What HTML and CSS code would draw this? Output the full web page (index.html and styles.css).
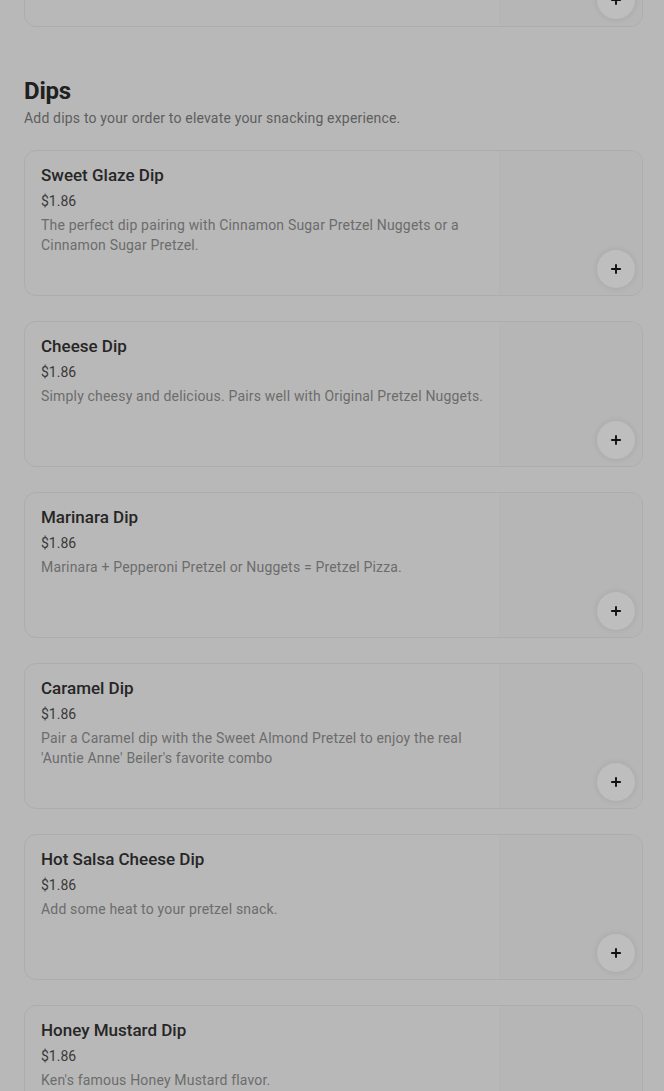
FILE: index.html
```html
<!DOCTYPE html>
<html lang="en">
<head>
<meta charset="utf-8">
<title>Dips</title>
<link rel="stylesheet" href="styles.css">
</head>
<body>
<main class="page">
  <div class="card prev-card">
    <div class="card-body"></div>
    <div class="card-media">
      <button class="add-btn" aria-label="Add"><svg viewBox="0 0 16 16" width="16" height="16"><path d="M8 2.5v11M2.5 8h11" stroke="#111" stroke-width="2.2" fill="none"/></svg></button>
    </div>
  </div>

  <section class="section">
    <h2 class="section-title">Dips</h2>
    <p class="section-sub">Add dips to your order to elevate your snacking experience.</p>

    <div class="list">
      <div class="card">
        <div class="card-body">
          <h3 class="item-name">Sweet Glaze Dip</h3>
          <div class="item-price">$1.86</div>
          <p class="item-desc">The perfect dip pairing with Cinnamon Sugar Pretzel Nuggets or a Cinnamon Sugar Pretzel.</p>
        </div>
        <div class="card-media">
          <button class="add-btn" aria-label="Add"><svg viewBox="0 0 16 16" width="16" height="16"><path d="M8 2.5v11M2.5 8h11" stroke="#111" stroke-width="2.2" fill="none"/></svg></button>
        </div>
      </div>

      <div class="card">
        <div class="card-body">
          <h3 class="item-name">Cheese Dip</h3>
          <div class="item-price">$1.86</div>
          <p class="item-desc">Simply cheesy and delicious. Pairs well with Original Pretzel Nuggets.</p>
        </div>
        <div class="card-media">
          <button class="add-btn" aria-label="Add"><svg viewBox="0 0 16 16" width="16" height="16"><path d="M8 2.5v11M2.5 8h11" stroke="#111" stroke-width="2.2" fill="none"/></svg></button>
        </div>
      </div>

      <div class="card">
        <div class="card-body">
          <h3 class="item-name">Marinara Dip</h3>
          <div class="item-price">$1.86</div>
          <p class="item-desc">Marinara + Pepperoni Pretzel or Nuggets = Pretzel Pizza.</p>
        </div>
        <div class="card-media">
          <button class="add-btn" aria-label="Add"><svg viewBox="0 0 16 16" width="16" height="16"><path d="M8 2.5v11M2.5 8h11" stroke="#111" stroke-width="2.2" fill="none"/></svg></button>
        </div>
      </div>

      <div class="card">
        <div class="card-body">
          <h3 class="item-name">Caramel Dip</h3>
          <div class="item-price">$1.86</div>
          <p class="item-desc">Pair a Caramel dip with the Sweet Almond Pretzel to enjoy the real 'Auntie Anne' Beiler's favorite combo</p>
        </div>
        <div class="card-media">
          <button class="add-btn" aria-label="Add"><svg viewBox="0 0 16 16" width="16" height="16"><path d="M8 2.5v11M2.5 8h11" stroke="#111" stroke-width="2.2" fill="none"/></svg></button>
        </div>
      </div>

      <div class="card">
        <div class="card-body">
          <h3 class="item-name">Hot Salsa Cheese Dip</h3>
          <div class="item-price">$1.86</div>
          <p class="item-desc">Add some heat to your pretzel snack.</p>
        </div>
        <div class="card-media">
          <button class="add-btn" aria-label="Add"><svg viewBox="0 0 16 16" width="16" height="16"><path d="M8 2.5v11M2.5 8h11" stroke="#111" stroke-width="2.2" fill="none"/></svg></button>
        </div>
      </div>

      <div class="card">
        <div class="card-body">
          <h3 class="item-name">Honey Mustard Dip</h3>
          <div class="item-price">$1.86</div>
          <p class="item-desc">Ken's famous Honey Mustard flavor.</p>
        </div>
        <div class="card-media">
          <button class="add-btn" aria-label="Add"><svg viewBox="0 0 16 16" width="16" height="16"><path d="M8 2.5v11M2.5 8h11" stroke="#111" stroke-width="2.2" fill="none"/></svg></button>
        </div>
      </div>
    </div>
  </section>
</main>
</body>
</html>
```

FILE: styles.css
```css
* { box-sizing: border-box; }

html, body {
  margin: 0;
  padding: 0;
  background: #b8b8b8;
  font-family: Roboto, "Liberation Sans", Arial, sans-serif;
  overflow: hidden;
}

.page {
  padding: 0 21px 0 24px;
  margin-top: -119px;
}

.card {
  display: flex;
  height: 146px;
  border: 1px solid #adadad;
  border-radius: 12px;
  background: #b8b8b8;
  overflow: hidden;
}

.card-body {
  flex: 1;
  padding: 12px 8px 12px 16px;
  min-width: 0;
}

.card-media {
  position: relative;
  width: 143px;
  flex: none;
  background: #b6b6b6;
  border-left: 1px solid #b4b4b4;
}

.add-btn {
  position: absolute;
  right: 7px;
  bottom: 7px;
  width: 38px;
  height: 38px;
  border-radius: 50%;
  border: none;
  padding: 0;
  background: #bebebe;
  box-shadow: 0 0 4px 2px rgba(0, 0, 0, 0.05);
  display: flex;
  align-items: center;
  justify-content: center;
}

.add-btn svg { display: block; width: 14px; height: 14px; }

.section {
  padding-top: 49px;
}

.section-title {
  margin: 0;
  font-size: 24px;
  line-height: 30px;
  font-weight: 700;
  color: #202020;
  letter-spacing: -0.2px;
}

.section-sub {
  margin: 2px 0 0;
  font-size: 14px;
  line-height: 20px;
  color: #5e5e5e;
  letter-spacing: 0.18px;
}

.list {
  margin-top: 22px;
  display: flex;
  flex-direction: column;
  gap: 25px;
}

.item-name {
  margin: 0;
  font-size: 17px;
  line-height: 24px;
  font-weight: 500;
  color: #262626;
}

.item-price {
  margin-top: 4px;
  font-size: 14px;
  line-height: 20px;
  color: #3a3a3a;
}

.item-desc {
  margin: 4px 0 0;
  font-size: 14px;
  line-height: 20px;
  color: #6c6c6c;
  letter-spacing: 0.18px;
}
```
